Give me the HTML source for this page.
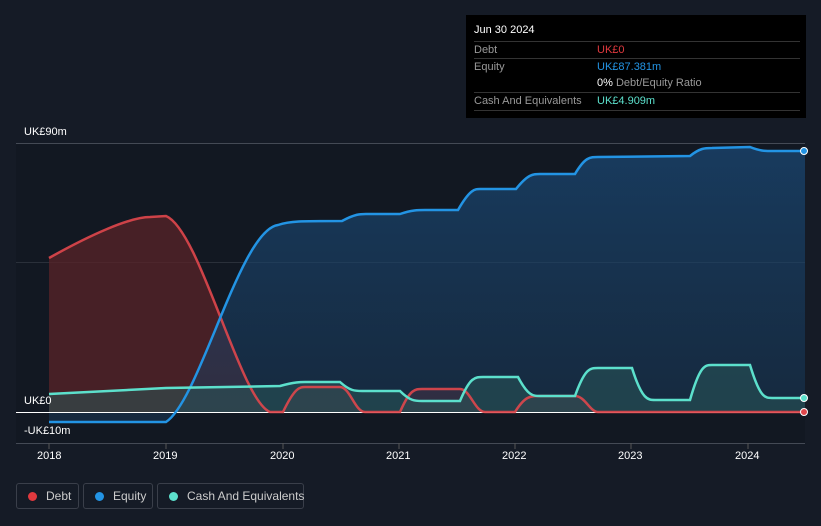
<!DOCTYPE html>
<html><head><meta charset="utf-8"><style>
html,body{margin:0;width:821px;height:526px;overflow:hidden}
body{background:#151b26;font-family:"Liberation Sans",sans-serif;position:relative}
.tt{position:absolute;left:466px;top:15px;width:340px;height:103px;background:#000;color:#fff;font-size:11px}
.row{position:absolute;left:8px;width:326px;border-top:1px solid #333;height:17px;line-height:17px;color:#999}
.row span{position:absolute;left:123px}
.lg{position:absolute;top:483px;height:26px;border:1px solid #3a3f4a;border-radius:3px;color:#ccc;font-size:12px;line-height:24px;box-sizing:border-box;white-space:nowrap}
.lg i{display:inline-block;width:9px;height:9px;border-radius:50%;margin:0 9px 0 11px;vertical-align:-1px}
.ax{position:absolute;color:#fff;font-size:11px}
</style></head><body>
<svg width="821" height="526" style="position:absolute;left:0;top:0">
<defs>
<linearGradient id="eg" x1="0" y1="0" x2="0" y2="1"><stop offset="0" stop-color="#1a4a78" stop-opacity=".7"/><stop offset="1" stop-color="#1a3a5a" stop-opacity=".5"/></linearGradient>
</defs>
<rect x="16" y="143" width="789" height="300" fill="#121822"/>
<line x1="16" y1="143.5" x2="805" y2="143.5" stroke="#444a55"/>
<line x1="16" y1="262.5" x2="805" y2="262.5" stroke="#2a303a"/>
<line x1="16" y1="443.5" x2="805" y2="443.5" stroke="#444a55"/>
<path d="M49,258 C90,235 130,217 150,217 L166,216 C200,230 240,400 270,412 L283,412 C295,387 300,387 305,387 L340,387 C350,387 355,412 365,412 L400,412 C410,389 415,389 422,389 L460,389 C470,389 475,412 485,412 L515,412 C525,396 530,396 540,396 L575,396 C585,396 590,412 598,412 L805,412 L805,412 L49,412Z" fill="#5a2328" opacity=".75"/>
<path d="M49,422 L166,422 C200,400 240,230 278,225 C290,221 300,221 342,221 C355,214 360,214 366,214 L400,214 C412,210 418,210 425,210 L458,210 C470,189 475,189 480,189 L516,189 C528,174 533,174 540,174 L575,174 C585,157 590,157 598,157 L690,156 C700,148 705,148 712,148 L750,147 C760,151 765,151 770,151 L805,151 L805,412 L49,412Z" fill="url(#eg)"/>
<path d="M49,394 L166,388 L280,386 C295,382 300,382 305,382 L340,382 C350,391 355,391 362,391 L400,391 C410,401 415,401 422,401 L460,401 C470,377 475,377 483,377 L518,377 C528,396 533,396 540,396 L575,396 C585,368 590,368 598,368 L632,368 C642,400 648,400 655,400 L690,400 C700,365 705,365 712,365 L750,365 C760,398 765,398 772,398 L805,398 L805,412 L49,412Z" fill="#2a5a5a" opacity=".5"/>
<line x1="16" y1="412.5" x2="805" y2="412.5" stroke="#fff"/>
<path d="M49,258 C90,235 130,217 150,217 L166,216 C200,230 240,400 270,412 L283,412 C295,387 300,387 305,387 L340,387 C350,387 355,412 365,412 L400,412 C410,389 415,389 422,389 L460,389 C470,389 475,412 485,412 L515,412 C525,396 530,396 540,396 L575,396 C585,396 590,412 598,412 L805,412" fill="none" stroke="#e0474c" stroke-width="2.5" opacity=".9"/>
<path d="M49,422 L166,422 C200,400 240,230 278,225 C290,221 300,221 342,221 C355,214 360,214 366,214 L400,214 C412,210 418,210 425,210 L458,210 C470,189 475,189 480,189 L516,189 C528,174 533,174 540,174 L575,174 C585,157 590,157 598,157 L690,156 C700,148 705,148 712,148 L750,147 C760,151 765,151 770,151 L805,151" fill="none" stroke="#2394e4" stroke-width="2.5"/>
<path d="M49,394 L166,388 L280,386 C295,382 300,382 305,382 L340,382 C350,391 355,391 362,391 L400,391 C410,401 415,401 422,401 L460,401 C470,377 475,377 483,377 L518,377 C528,396 533,396 540,396 L575,396 C585,368 590,368 598,368 L632,368 C642,400 648,400 655,400 L690,400 C700,365 705,365 712,365 L750,365 C760,398 765,398 772,398 L805,398" fill="none" stroke="#5ce0cc" stroke-width="2.5"/>
<circle cx="804" cy="151" r="3.5" fill="#2394e4" stroke="#fff"/>
<circle cx="804" cy="398" r="3.5" fill="#5ce0cc" stroke="#fff"/>
<circle cx="804" cy="412" r="3.5" fill="#e0474c" stroke="#fff"/>
<g stroke="#555" ><line x1="49" y1="443" x2="49" y2="449"/><line x1="166" y1="443" x2="166" y2="449"/><line x1="283" y1="443" x2="283" y2="449"/><line x1="399" y1="443" x2="399" y2="449"/><line x1="515" y1="443" x2="515" y2="449"/><line x1="631" y1="443" x2="631" y2="449"/><line x1="748" y1="443" x2="748" y2="449"/></g>
</svg>
<div class="ax" style="left:24px;top:126px">UK£90m</div>
<div class="ax" style="left:24px;top:395px">UK£0</div>
<div class="ax" style="left:24px;top:425px">-UK£10m</div>
<div class="ax" style="left:37px;top:450px">2018</div>
<div class="ax" style="left:153px;top:450px">2019</div>
<div class="ax" style="left:270px;top:450px">2020</div>
<div class="ax" style="left:386px;top:450px">2021</div>
<div class="ax" style="left:502px;top:450px">2022</div>
<div class="ax" style="left:618px;top:450px">2023</div>
<div class="ax" style="left:735px;top:450px">2024</div>
<div class="tt">
<div style="position:absolute;left:8px;top:9px">Jun 30 2024</div>
<div class="row" style="top:26px">Debt<span style="color:#e0393e">UK£0</span></div>
<div class="row" style="top:43px">Equity<span style="color:#2394e4">UK£87.381m</span></div>
<div class="row" style="top:60px;border:0"><span><b style="color:#fff;font-weight:normal">0%</b> Debt/Equity Ratio</span></div>
<div class="row" style="top:77px">Cash And Equivalents<span style="color:#5ce0cc">UK£4.909m</span></div>
<div class="row" style="top:95px;height:0"></div>
</div>
<div class="lg" style="left:16px;width:63px"><i style="background:#e0393e"></i>Debt</div>
<div class="lg" style="left:83px;width:70px"><i style="background:#2394e4"></i>Equity</div>
<div class="lg" style="left:157px;width:147px"><i style="background:#5ce0cc"></i>Cash And Equivalents</div>
</body></html>
